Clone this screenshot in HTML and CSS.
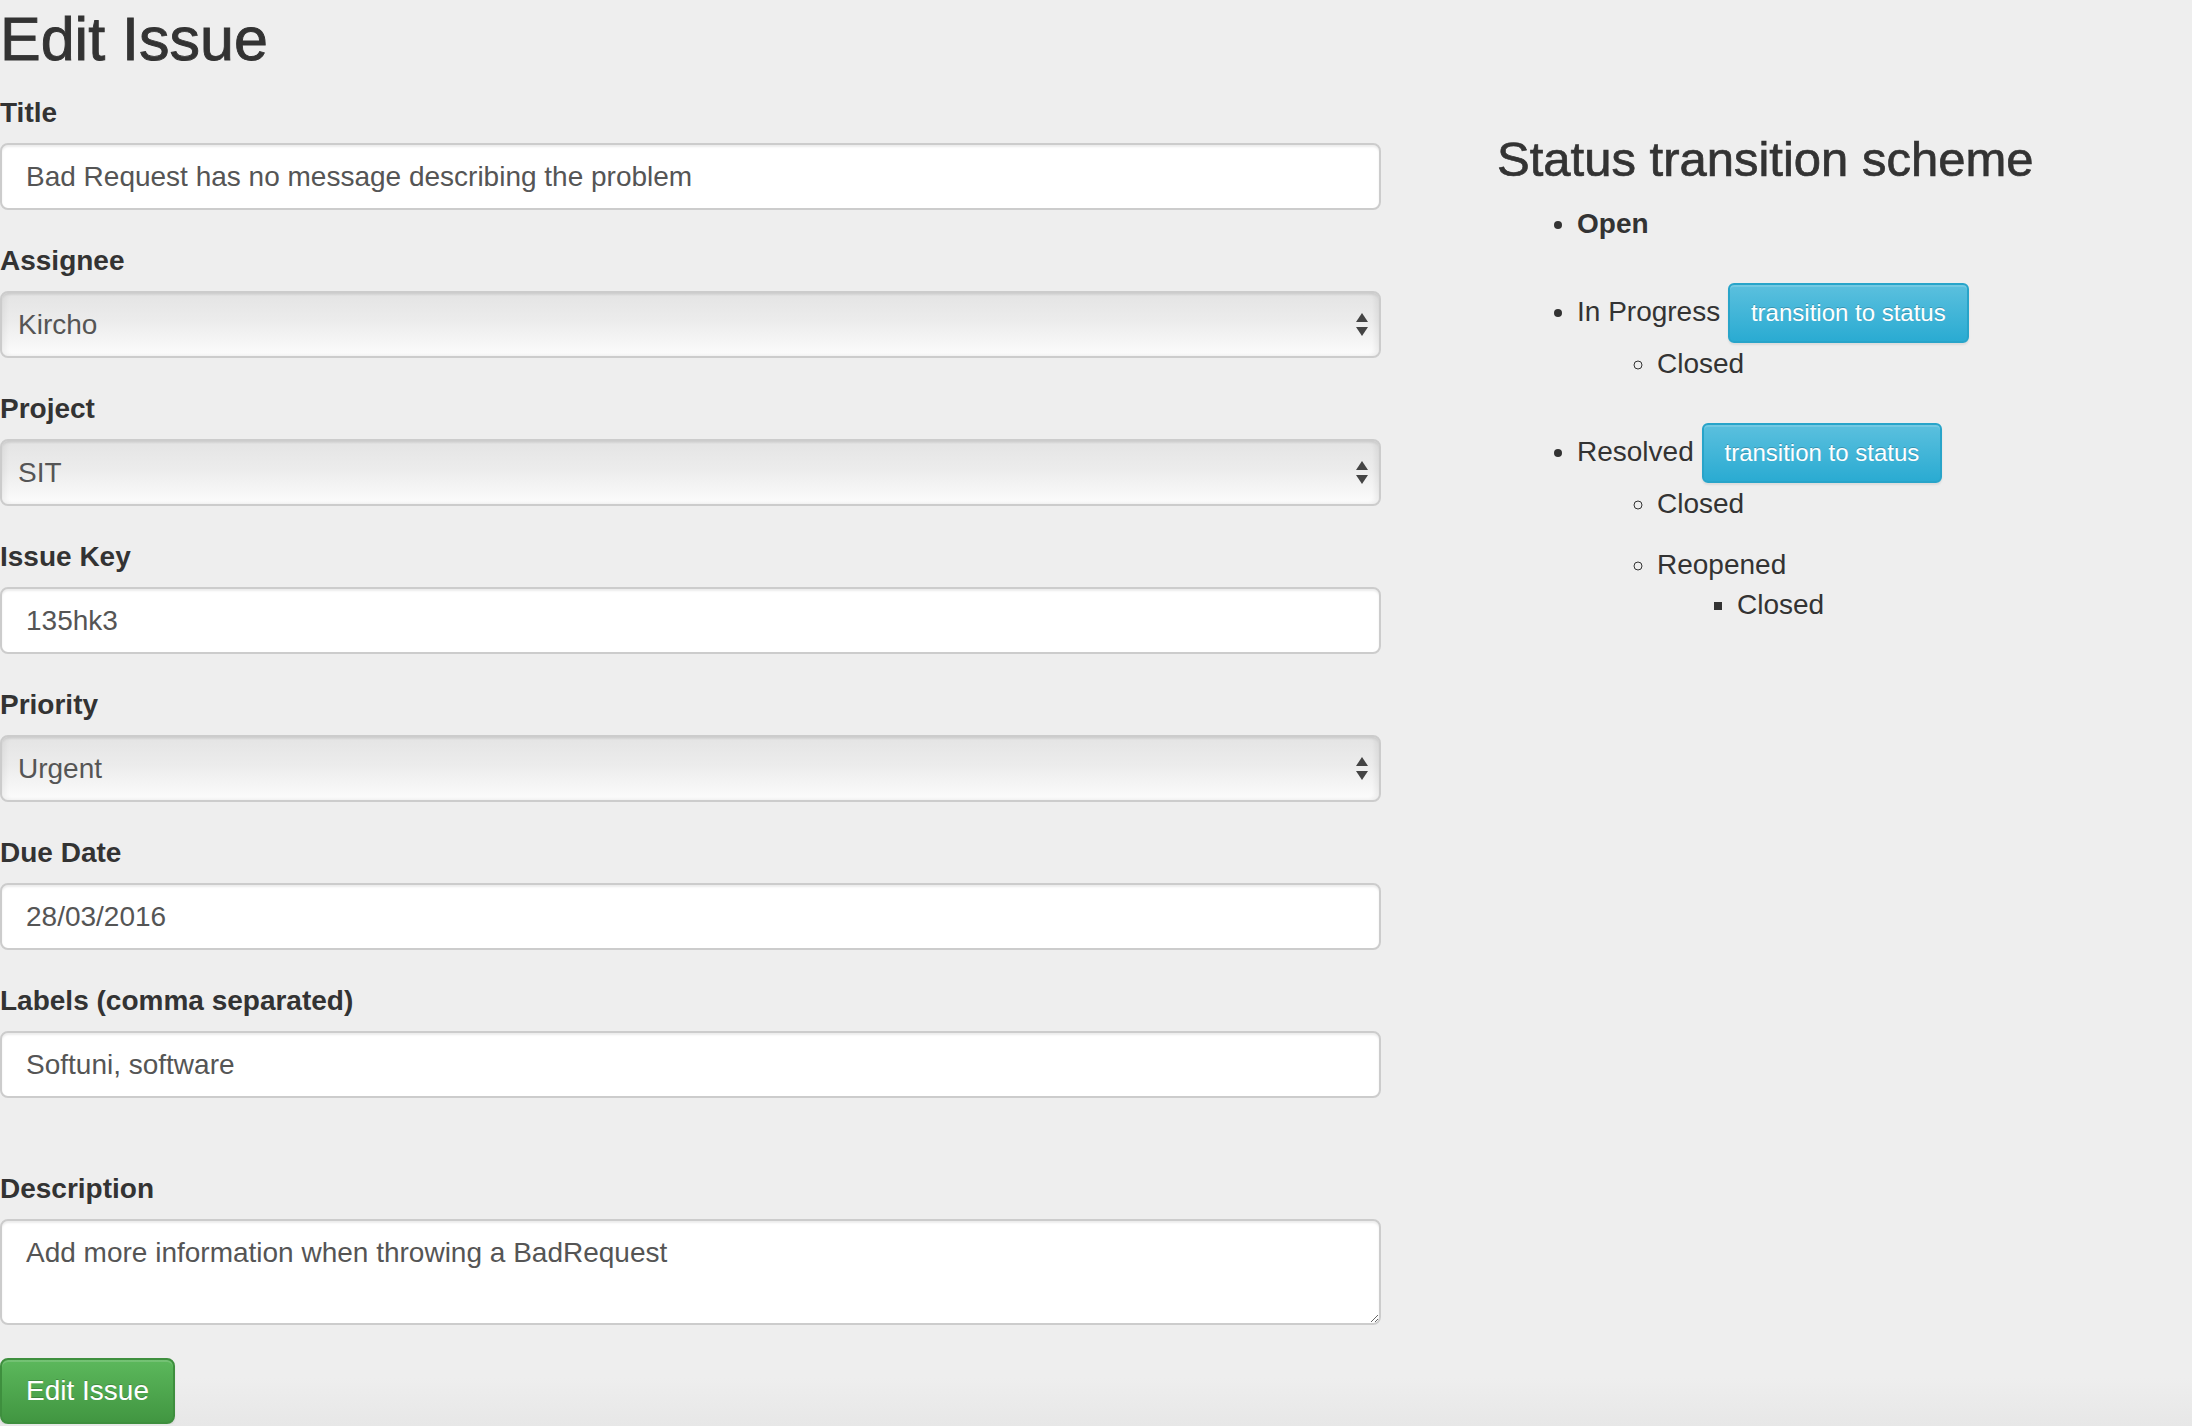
FILE: index.html
```html
<!DOCTYPE html>
<html>
<head>
<meta charset="utf-8">
<title>Edit Issue</title>
<link rel="stylesheet" href="styles.css">
</head>
<body>
<div class="page">
  <main class="form-col">
    <h1 class="page-title">Edit Issue</h1>
    <form class="issue-form">
      <div class="form-group">
        <label class="control-label">Title</label>
        <input class="form-control" type="text" value="Bad Request has no message describing the problem">
      </div>
      <div class="form-group">
        <label class="control-label">Assignee</label>
        <div class="select-wrap">
          <select class="form-select"><option>Kircho</option></select>
          <svg class="select-arrows" width="14" height="26" viewBox="0 0 14 26"><path d="M7 1 L13 10 L1 10 Z" fill="#444"/><path d="M1 15 L13 15 L7 24 Z" fill="#444"/></svg>
        </div>
      </div>
      <div class="form-group">
        <label class="control-label">Project</label>
        <div class="select-wrap">
          <select class="form-select"><option>SIT</option></select>
          <svg class="select-arrows" width="14" height="26" viewBox="0 0 14 26"><path d="M7 1 L13 10 L1 10 Z" fill="#444"/><path d="M1 15 L13 15 L7 24 Z" fill="#444"/></svg>
        </div>
      </div>
      <div class="form-group">
        <label class="control-label">Issue Key</label>
        <input class="form-control" type="text" value="135hk3">
      </div>
      <div class="form-group">
        <label class="control-label">Priority</label>
        <div class="select-wrap">
          <select class="form-select"><option>Urgent</option></select>
          <svg class="select-arrows" width="14" height="26" viewBox="0 0 14 26"><path d="M7 1 L13 10 L1 10 Z" fill="#444"/><path d="M1 15 L13 15 L7 24 Z" fill="#444"/></svg>
        </div>
      </div>
      <div class="form-group">
        <label class="control-label">Due Date</label>
        <input class="form-control" type="text" value="28/03/2016">
      </div>
      <div class="form-group form-group-spaced">
        <label class="control-label">Labels (comma separated)</label>
        <input class="form-control" type="text" value="Softuni, software">
      </div>
      <div class="form-group form-group-last">
        <label class="control-label">Description</label>
        <textarea class="form-control form-textarea">Add more information when throwing a BadRequest</textarea>
      </div>
      <button type="button" class="btn btn-success">Edit Issue</button>
    </form>
  </main>
  <aside class="scheme-col">
    <h2 class="scheme-title">Status transition scheme</h2>
    <ul class="status-list">
      <li class="status-item"><strong>Open</strong></li>
      <li class="status-item">In Progress <button type="button" class="btn btn-info btn-sm">transition to status</button>
        <ul class="sub-list">
          <li>Closed</li>
        </ul>
      </li>
      <li class="status-item">Resolved <button type="button" class="btn btn-info btn-sm">transition to status</button>
        <ul class="sub-list">
          <li>Closed</li>
          <li>Reopened
            <ul class="sub-sub-list">
              <li>Closed</li>
            </ul>
          </li>
        </ul>
      </li>
    </ul>
  </aside>
</div>
</body>
</html>
```
FILE: styles.css
```css
html {
  min-height: 100%;
  background: linear-gradient(to bottom, #eeeeee 0, #eeeeee 1378px, #e7e7e7 1426px);
}
body {
  margin: 0;
  font-family: "Liberation Sans", Arial, Helvetica, sans-serif;
  font-size: 28px;
  line-height: 40px;
  color: #333;
}
.page {
  display: flex;
  gap: 116px;
  align-items: flex-start;
}
.form-col {
  width: 1381px;
  flex: none;
}
.page-title {
  font-size: 61px;
  line-height: 67px;
  font-weight: 500;
  -webkit-text-stroke: 0.9px #333;
  margin: 6px 0 20px;
  color: #333;
}
.form-group {
  margin-bottom: 31px;
}
.form-group-spaced {
  margin-bottom: 71px;
}
.form-group-last {
  margin-bottom: 33px;
}
.control-label {
  display: block;
  font-weight: bold;
  margin-bottom: 10px;
  line-height: 40px;
}
.form-control {
  display: block;
  box-sizing: border-box;
  width: 100%;
  height: 67px;
  padding: 12px 24px;
  font-family: inherit;
  font-size: 28px;
  line-height: 40px;
  color: #555;
  background: #fff;
  border: 2px solid #ccc;
  border-radius: 8px;
  box-shadow: inset 0 2px 2px rgba(0, 0, 0, 0.075);
  outline: none;
}
.form-textarea {
  height: 106px;
  resize: vertical;
}
.select-wrap {
  position: relative;
}
.form-select {
  display: block;
  box-sizing: border-box;
  width: 100%;
  height: 67px;
  padding: 0 40px 0 16px;
  font-family: inherit;
  font-size: 28px;
  color: #555;
  -webkit-appearance: none;
  appearance: none;
  border: 2px solid #ccc;
  border-radius: 8px;
  background: linear-gradient(to bottom, #e4e4e4 0%, #ececec 45%, #fcfcfc 100%);
  box-shadow: inset 0 2px 2px rgba(0, 0, 0, 0.05), inset -4px 0 4px rgba(0, 0, 0, 0.05), inset 4px 0 4px rgba(0, 0, 0, 0.04);
  outline: none;
}
.select-arrows {
  position: absolute;
  right: 12px;
  top: 21px;
}
.btn {
  display: inline-block;
  font-family: inherit;
  font-weight: normal;
  color: #fff;
  text-shadow: 0 -1px 0 rgba(0, 0, 0, 0.2);
  cursor: pointer;
  box-sizing: border-box;
  vertical-align: baseline;
}
.btn-success {
  font-size: 28px;
  line-height: 40px;
  padding: 11px 24px;
  border: 2px solid #3e8f3e;
  border-radius: 8px;
  background: linear-gradient(to bottom, #5cb85c 0%, #419641 100%);
  box-shadow: inset 0 2px 0 rgba(255, 255, 255, 0.15), 0 2px 2px rgba(0, 0, 0, 0.075);
}
.btn-info.btn-sm {
  font-size: 24px;
  line-height: 36px;
  padding: 10px 21px;
  border: 2px solid #28a4c9;
  border-radius: 6px;
  background: linear-gradient(to bottom, #5bc0de 0%, #2aabd2 100%);
  box-shadow: inset 0 2px 0 rgba(255, 255, 255, 0.15), 0 2px 2px rgba(0, 0, 0, 0.075);
}
.scheme-col {
  flex: 1;
}
.scheme-title {
  font-size: 49px;
  line-height: 54px;
  font-weight: 500;
  -webkit-text-stroke: 0.7px #333;
  margin: 132px 0 18px;
  color: #333;
}
.status-list {
  margin: 0;
  padding-left: 80px;
  list-style: disc;
}
.status-item {
  margin-bottom: 39px;
}
.sub-list {
  margin: 0;
  padding: 1px 0 0 80px;
  list-style: circle;
}
.sub-list > li + li {
  margin-top: 21px;
}
.sub-sub-list {
  margin: 0;
  padding-left: 80px;
  list-style: square;
}
```
